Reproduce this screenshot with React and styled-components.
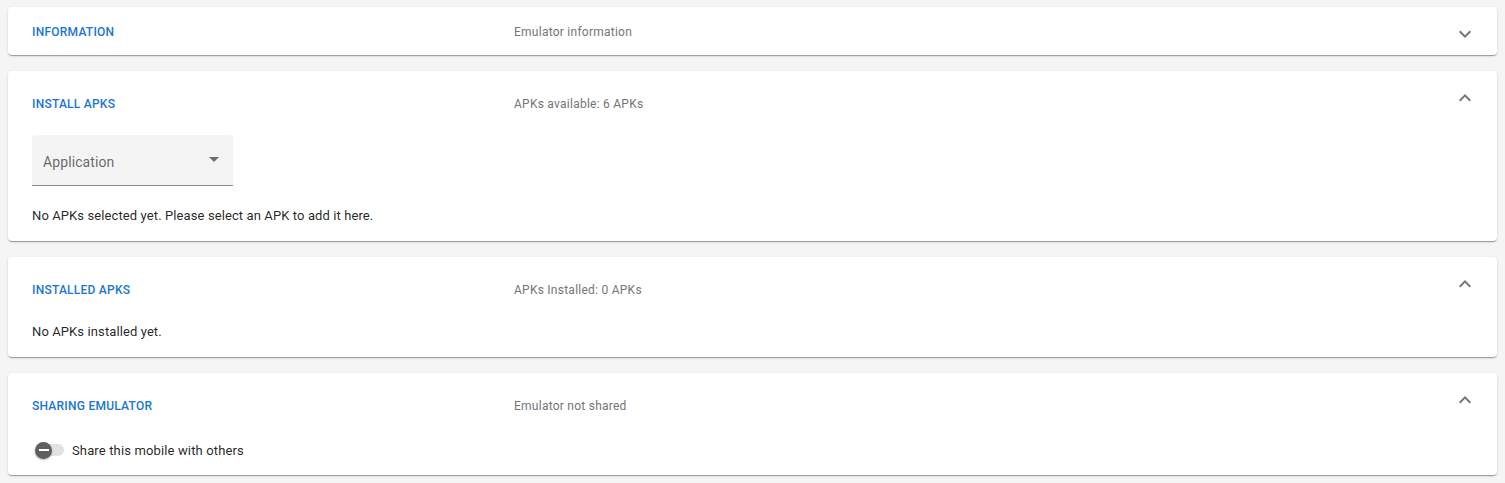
import React from "react";
import styled, { createGlobalStyle } from "styled-components";

const Global = createGlobalStyle`
  html, body { margin: 0; padding: 0; background: #f5f5f5; }
  body { font-family: Roboto, "Liberation Sans", Arial, sans-serif; }
  * { box-sizing: border-box; }
`;

const Page = styled.div`
  display: flex;
  flex-direction: column;
  gap: 16px;
  padding: 7px 8px 9px 8px;
  background: #f5f5f5;
`;

const Card = styled.section`
  background: #fff;
  border-radius: 4px;
  box-shadow: 0px 2px 1px -1px rgba(0, 0, 0, 0.2),
    0px 1px 1px 0px rgba(0, 0, 0, 0.14), 0px 1px 3px 0px rgba(0, 0, 0, 0.12);
`;

const Header = styled.div`
  display: flex;
  align-items: center;
  height: ${(p) => (p.$expanded ? "64px" : "48px")};
  padding: 2px 20px 0 24px;
`;

const Title = styled.div`
  flex: 0 0 482px;
  font-size: 12px;
  font-weight: 500;
  color: #1976d2;
  text-transform: uppercase;
  letter-spacing: 0.02em;
`;

const Secondary = styled.div`
  flex: 1;
  font-size: 12px;
  letter-spacing: 0.25px;
  color: #757575;
`;

const ExpandIcon = styled.svg`
  align-self: flex-start;
  margin-top: 13px;
  width: 24px;
  height: 24px;
  fill: #757575;
  transform: ${(p) => (p.$expanded ? "rotate(180deg)" : "none")};
`;

const Details = styled.div`
  padding: 0 24px ${(p) => p.$bottom || 16}px 24px;
`;

const Body = styled.p`
  margin: ${(p) => p.$top || 0}px 0 0 0;
  padding-top: 1px;
  font-size: 13px;
  line-height: 19px;
  letter-spacing: 0.008em;
  color: rgba(0, 0, 0, 0.87);
`;

const Select = styled.div`
  display: flex;
  align-items: center;
  justify-content: space-between;
  width: 201px;
  height: 51px;
  padding: 4px 7px 0 11px;
  background: #f4f4f4;
  border-radius: 4px 4px 0 0;
  border-bottom: 1px solid #8c8c8c;
`;

const SelectLabel = styled.span`
  font-size: 14px;
  letter-spacing: 0.1px;
  color: rgba(0, 0, 0, 0.6);
`;

const ArrowIcon = styled.svg`
  width: 24px;
  height: 24px;
  margin-top: -6px;
  fill: #6e6e6e;
`;

const ToggleRow = styled.label`
  display: flex;
  align-items: center;
  height: 25px;
  gap: 8px;
  padding-top: 1px;
  font-size: 13px;
  letter-spacing: 0.01071em;
  color: rgba(0, 0, 0, 0.87);
`;

const Track = styled.span`
  position: relative;
  display: inline-flex;
  align-items: center;
  width: 26px;
  height: 12px;
  margin-left: 6px;
  border-radius: 6px;
  background: #e2e2e2;
`;

const Thumb = styled.span`
  position: absolute;
  left: -3px;
  top: -2.5px;
  width: 17px;
  height: 17px;
  border-radius: 50%;
  background: #5f5f5f;
  box-shadow: 0 1px 2px rgba(0, 0, 0, 0.3);
  display: flex;
  align-items: center;
  justify-content: center;
  &::after {
    content: "";
    width: 10px;
    height: 2px;
    background: #fff;
  }
`;

const Chevron = ({ expanded }) => (
  <ExpandIcon $expanded={expanded} viewBox="0 0 24 24">
    <path d="M16.59 8.59 12 13.17 7.41 8.59 6 10l6 6 6-6z" />
  </ExpandIcon>
);

const Section = ({ title, secondary, expanded, bottom, children }) => (
  <Card>
    <Header $expanded={expanded}>
      <Title>{title}</Title>
      <Secondary>{secondary}</Secondary>
      <Chevron expanded={expanded} />
    </Header>
    {expanded && <Details $bottom={bottom}>{children}</Details>}
  </Card>
);

export default function App() {
  return (
    <>
      <Global />
      <Page>
        <Section title="Information" secondary="Emulator information" />
        <Section title="Install APKs" secondary="APKs available: 6 APKs" expanded>
          <Select>
            <SelectLabel>Application</SelectLabel>
            <ArrowIcon viewBox="0 0 24 24">
              <path d="M7 10l5 5 5-5z" />
            </ArrowIcon>
          </Select>
          <Body $top={19}>No APKs selected yet. Please select an APK to add it here.</Body>
        </Section>
        <Section title="Installed APKs" secondary="APKs Installed: 0 APKs" expanded>
          <Body>No APKs installed yet.</Body>
        </Section>
        <Section title="Sharing emulator" secondary="Emulator not shared" expanded bottom={13}>
          <ToggleRow>
            <Track>
              <Thumb />
            </Track>
            Share this mobile with others
          </ToggleRow>
        </Section>
      </Page>
    </>
  );
}
